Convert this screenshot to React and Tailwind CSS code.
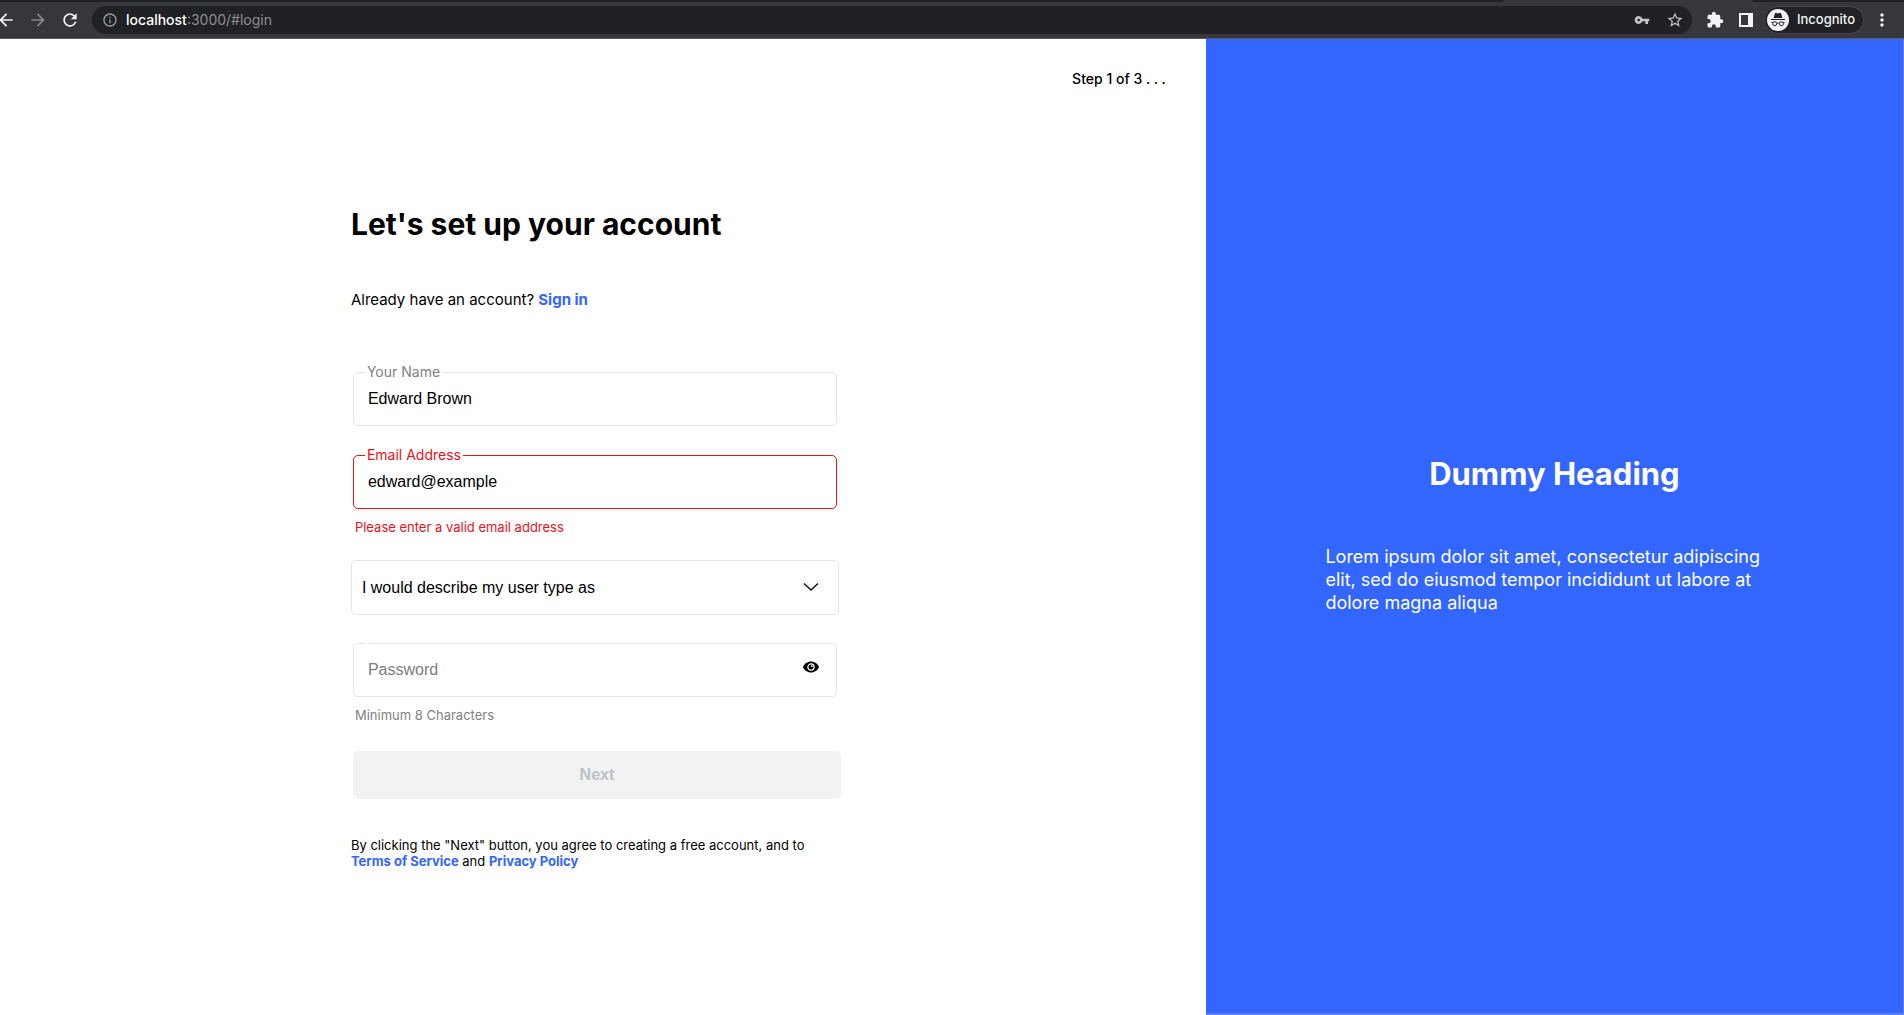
import React, { useState } from "react";
import {
  MdArrowBack,
  MdArrowForward,
  MdRefresh,
  MdInfoOutline,
  MdVpnKey,
  MdStarOutline,
  MdExtension,
  MdMoreVert,
} from "react-icons/md";

function SidePanelIcon() {
  return (
    <svg viewBox="0 0 20 20" className="size-5" fill="none" aria-hidden="true">
      <path fill="#f1f3f4" fillRule="evenodd" d="M3 3h14v14H3V3Zm2 2v10h7V5H5Z" />
    </svg>
  );
}

function IncognitoIcon() {
  return (
    <svg viewBox="0 0 22 22" className="size-[22px]" aria-hidden="true">
      <circle cx="11" cy="11" r="11" fill="#f1f3f4" />
      <path
        fill="#202124"
        d="M7.9 4.5c.2-.6.8-.8 1.3-.6l1.8.5 1.8-.5c.5-.2 1.1 0 1.3.6L15.4 9H6.600Z"
      />
      <path fill="#202124" d="M4 10h14v1H4z" />
      <g fill="none" stroke="#202124">
        <circle cx="7.700" cy="14.700" r="2" />
        <circle cx="14.300" cy="14.700" r="2" />
        <path d="M9.700 14.400c.8-.5 1.800-.5 2.600 0M4.500 13.500h1.500M16 13.500h1.500" />
      </g>
    </svg>
  );
}

function EyeIcon() {
  return (
    <svg viewBox="0 0 16 12" className="h-3 w-4" aria-hidden="true">
      <path d="M8 .5C4.400.5 1.300 2.800 0 6c1.300 3.200 4.400 5.500 8 5.500s6.700-2.300 8-5.500C14.700 2.800 11.600.5 8 .5Z" />
      <circle cx="8" cy="6" r="3.100" fill="#000" stroke="#fff" strokeWidth="1.200" />
      <path fill="#fff" d="M8 3.400 10.300 5.500 8.300 6Z" />
    </svg>
  );
}

function BrowserBar() {
  return (
    <header className="border-b border-[#5d595f] bg-[#37363a]">
      <div className="flex h-0.5 justify-between">
        <div className="w-[79%] rounded-br bg-[#202124]" />
        <div className="w-[8%] rounded-bl bg-[#202124]" />
      </div>
      <div className="flex h-9 items-center pr-3 text-[#f1f3f4]">
        <div className="-ml-1 mr-3 flex gap-3">
          <button aria-label="Back">
            <MdArrowBack className="size-5" />
          </button>
          <button aria-label="Forward" className="text-[#88878a]">
            <MdArrowForward className="size-5" />
          </button>
          <button aria-label="Reload">
            <MdRefresh className="size-5" />
          </button>
        </div>
        <div className="flex h-7 flex-1 items-center rounded-full bg-[#202124] pl-2.5 pr-2">
          <MdInfoOutline className="mr-2 size-4 text-[#9aa0a6]" />
          <p className="flex-1 text-sm text-[#8e8f92]">
            <span className="font-medium text-white">localhost</span>:3000/#login
          </p>
          <div className="flex gap-3.5 text-[#c4c5c7]">
            <button aria-label="Passwords">
              <MdVpnKey className="mx-0.5 size-4" />
            </button>
            <button aria-label="Bookmark">
              <MdStarOutline className="size-[18px]" />
            </button>
          </div>
        </div>
        <button aria-label="Extensions" className="ml-3.5">
          <MdExtension className="size-[18px]" />
        </button>
        <button aria-label="Side panel" className="ml-3">
          <SidePanelIcon />
        </button>
        <button className="ml-2 flex h-7 items-center gap-2 rounded-full border border-[#46464a] bg-[#202124] pl-0.5 pr-2 text-[13px] font-medium">
          <IncognitoIcon />
          Incognito
        </button>
        <button aria-label="Menu" className="ml-2">
          <MdMoreVert className="size-5" />
        </button>
      </div>
    </header>
  );
}

function TextField({ id, label, error, type = "text", defaultValue }) {
  return (
    <div className="relative">
      <input
        id={id}
        type={type}
        defaultValue={defaultValue}
        className={
          "h-[54px] w-full rounded-[5px] border bg-white px-3.5 font-['Liberation_Sans',sans-serif] text-base outline-none " +
          (error ? "border-[#f0100f]" : "border-[#e5e5e5]")
        }
      />
      <label
        htmlFor={id}
        className={
          "absolute -top-2 left-3 bg-white px-0.5 text-sm leading-4 " +
          (error ? "text-[#ea1220]" : "text-[#828282]")
        }
      >
        {label}
      </label>
    </div>
  );
}

function PasswordField() {
  const [shown, setShown] = useState(false);
  return (
    <div className="relative">
      <input
        id="password"
        aria-label="Password"
        type={shown ? "text" : "password"}
        placeholder="Password"
        className="h-[54px] w-full rounded-[5px] border border-[#e5e5e5] bg-white pl-3.5 pr-12 font-['Liberation_Sans',sans-serif] text-base outline-none placeholder:text-[#7d7d7d]"
      />
      <span className="absolute left-3 top-0 h-px w-1 bg-white" />
      <button
        type="button"
        aria-label="Show password"
        onClick={() => setShown(!shown)}
        className="absolute right-[18px] top-[18px]"
      >
        <EyeIcon />
      </button>
    </div>
  );
}

function UserTypeSelect() {
  return (
    <div className="relative mr-4">
      <select
        aria-label="User type"
        className="block h-[55px] w-full appearance-none rounded-[5px] border border-[#e5e5e5] bg-white px-2.5 font-['Liberation_Sans',sans-serif] text-base outline-none"
      >
        <option>I would describe my user type as</option>
        <option>Developer</option>
      </select>
      <svg
        viewBox="0 0 16 10"
        className="pointer-events-none absolute right-5 top-[22px] h-2.5 w-4"
        fill="none"
        stroke="#111"
        strokeWidth="1.500"
        aria-hidden="true"
      >
        <path d="m1 1.500 7 6.500 7-6.500" />
      </svg>
    </div>
  );
}

function SignupForm() {
  return (
    <form className="mx-auto w-full max-w-[504px]" onSubmit={(e) => e.preventDefault()}>
      <h1 className="text-3xl font-bold leading-10">Let's set up your account</h1>
      <p className="mt-11 text-[15px] leading-6">
        Already have an account?{" "}
        <a href="#signin" className="font-bold text-[#3366ff]">
          Sign in
        </a>
      </p>
      <div className="ml-0.5 mr-[18px] mt-[60px]">
        <TextField id="name" label="Your Name" defaultValue="Edward Brown" />
        <div className="mt-[29px]">
          <TextField id="email" label="Email Address" defaultValue="edward@example" error />
        </div>
        <p className="ml-0.5 mt-2.5 text-[13px] leading-4 text-[#ea1220]">
          Please enter a valid email address
        </p>
      </div>
      <div className="mt-[25px]">
        <UserTypeSelect />
      </div>
      <div className="ml-0.5 mr-[18px] mt-7">
        <PasswordField />
        <p className="ml-0.5 mt-2.5 text-[13px] leading-4 text-[#828282]">Minimum 8 Characters</p>
      </div>
      <div className="ml-0.5 mr-3.5 mt-7">
        <button
          disabled
          className="h-12 w-full rounded-[5px] bg-[#f1f2f4] font-['Liberation_Sans',sans-serif] text-base font-bold text-[#bdc1c5]"
        >
          Next
        </button>
      </div>
      <p className="mt-[38px] pr-4 text-[13px] leading-4">
        By clicking the "Next" button, you agree to creating a free account, and to{" "}
        <a href="#terms" className="font-bold text-[#3366ff]">
          Terms of Service
        </a>{" "}
        and{" "}
        <a href="#privacy" className="font-bold text-[#3366ff]">
          Privacy Policy
        </a>
      </p>
    </form>
  );
}

export default function App() {
  return (
    <div className="flex min-h-screen flex-col bg-white font-['Inter',sans-serif] text-black">
      <BrowserBar />
      <main className="grid flex-1 grid-cols-[19fr_11fr]">
        <section className="pt-7">
          <p className="mb-[113px] pr-10 text-right text-sm font-medium leading-6">
            Step 1 of 3 . . .
          </p>
          <SignupForm />
        </section>
        <aside className="flex flex-col items-center justify-center border-b-2 border-r border-[#5b80f5] bg-[#3366ff] pt-4 text-white">
          <h2 className="text-[31px] font-bold leading-10">Dummy Heading</h2>
          <p className="mt-[51px] w-full max-w-[458px] text-lg leading-[23px]">
            Lorem ipsum dolor sit amet, consectetur adipiscing elit, sed do eiusmod tempor
            incididunt ut labore at dolore magna aliqua
          </p>
        </aside>
      </main>
    </div>
  );
}
